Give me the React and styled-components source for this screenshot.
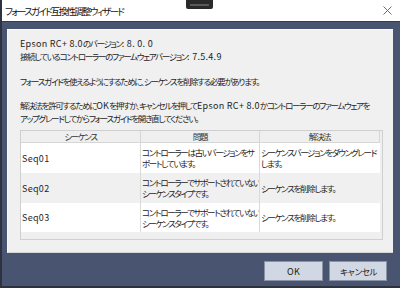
import styled, { createGlobalStyle } from "styled-components";

const GlobalStyle = createGlobalStyle`
  html, body {
    margin: 0;
    padding: 0;
    background: #485470;
  }
  body {
    font-family: "Noto Sans CJK JP", "Noto Sans", sans-serif;
    font-feature-settings: "palt";
    color: #1e1e1e;
  }
`;

const Window = styled.div`
  position: relative;
  width: 400px;
  height: 288px;
  box-sizing: border-box;
  display: flex;
  flex-direction: column;
  background: #485470;
  border-left: 2px solid #2c3240;
  border-bottom: 2px solid #2c3240;
  overflow: hidden;
`;

const TitleBar = styled.div`
  height: 21px;
  flex: none;
  display: flex;
  align-items: center;
  justify-content: space-between;
  padding: 0 8px 0 5px;
  margin-left: -2px;
  background: #ffffff;
  border-bottom: 1px solid #343b4c;
`;

const Title = styled.span`
  font-size: 9.5px;
  letter-spacing: -1.7px;
  color: #111;
  white-space: nowrap;
`;

const CloseIcon = styled.svg`
  width: 9px;
  height: 9px;
`;

const GrabTab = styled.div`
  position: absolute;
  left: 184px;
  top: 0;
  width: 27px;
  height: 9px;
  background: #2a2a2a;
  border-radius: 0 0 2px 2px;
  display: flex;
  align-items: center;
  justify-content: center;

  &::after {
    content: "";
    width: 19px;
    height: 2px;
    background: #5a5a5a;
  }
`;

const Body = styled.div`
  flex: 1;
  display: flex;
  flex-direction: column;
  padding: 7px 7px 0 5px;
`;

const Panel = styled.div`
  height: 224px;
  box-sizing: border-box;
  background: #f0f0f0;
  border-top: 1px solid #fafafa;
  border-left: 1px solid #fafafa;
  border-bottom: 1px solid #d6d6d6;
  padding: 7px 10px 0 12px;
  font-size: 8.5px;
  letter-spacing: -1.3px;
  line-height: 12px;
`;

const Latin = styled.span`
  font-size: 9px;
  letter-spacing: 0.3px;
`;

const Line = styled.div`
  white-space: nowrap;
  min-height: 12px;
`;

const Table = styled.div`
  margin-top: 6px;
  height: 110px;
  box-sizing: border-box;
  border: 1px solid #cfcfcf;
  background: #efefef;
  display: grid;
  grid-template-columns: 120px 119px 120px;
  grid-template-rows: 12px 30px 30px 29px;
  align-content: start;
`;

const HeadCell = styled.div`
  background: #efefef;
  border-right: 1px solid #d6d6d6;
  border-bottom: 1px solid #d6d6d6;
  display: flex;
  align-items: center;
  justify-content: center;
  line-height: 11px;
  color: #333;

  &:last-of-type {
    border-right: none;
  }
`;

const Cell = styled.div`
  background: ${(p) => (p.$alt ? "#f0f0f0" : "#ffffff")};
  border-right: ${(p) => (p.$last ? "none" : "1px solid #dadada")};
  display: flex;
  align-items: center;
  padding-left: 1px;
  line-height: 11px;
  white-space: nowrap;
  overflow: hidden;
`;

const Footer = styled.div`
  display: flex;
  justify-content: flex-end;
  gap: 6px;
  padding: 8px 6px 0 0;
`;

const Button = styled.button`
  width: ${(p) => p.$w}px;
  height: 20px;
  box-sizing: border-box;
  background: #d1d7e3;
  border: 1px solid #8a93a5;
  font-family: inherit;
  font-size: ${(p) => (p.$jp ? "8.5px" : "9px")};
  letter-spacing: ${(p) => (p.$jp ? "-1.2px" : "0.2px")};
  color: #1a1a1a;
  padding: 0;
`;

const rows = [
  {
    seq: "Seq01",
    problem: ["コントローラーは古いバージョンをサ", "ポートしています。"],
    fix: ["シーケンスバージョンをダウングレード", "します。"],
  },
  {
    seq: "Seq02",
    problem: ["コントローラーでサポートされていない", "シーケンスタイプです。"],
    fix: ["シーケンスを削除します。"],
  },
  {
    seq: "Seq03",
    problem: ["コントローラーでサポートされていない", "シーケンスタイプです。"],
    fix: ["シーケンスを削除します。"],
  },
];

function Lines({ items }) {
  return (
    <div>
      {items.map((t) => (
        <div key={t}>{t}</div>
      ))}
    </div>
  );
}

export default function App() {
  return (
    <>
      <GlobalStyle />
      <Window>
        <TitleBar>
          <Title>フォースガイド互換性調整ウィザード</Title>
          <CloseIcon viewBox="0 0 9 9">
            <path d="M0.5 0.5 L8.5 8.5 M8.5 0.5 L0.5 8.5" stroke="#6f6f6f" strokeWidth="1" fill="none" />
          </CloseIcon>
        </TitleBar>
        <GrabTab />
        <Body>
          <Panel>
            <Line><Latin>Epson RC+ 8.0</Latin>のバージョン<Latin>: 8. 0. 0</Latin></Line>
            <Line>接続しているコントローラーのファームウェアバージョン<Latin>: 7.5.4.9</Latin></Line>
            <Line />
            <Line>フォースガイドを使えるようにするために、シーケンスを削除する必要があります。</Line>
            <Line />
            <Line>解決法を許可するために<Latin>OK</Latin>を押すか、キャンセルを押して<Latin>Epson RC+ 8.0</Latin>かコントローラーのファームウェアを</Line>
            <Line>アップグレードしてからフォースガイドを開き直してください。</Line>
            <Table>
              <HeadCell>シーケンス</HeadCell>
              <HeadCell>問題</HeadCell>
              <HeadCell>解決法</HeadCell>
              {rows.map((r, i) => [
                <Cell key={r.seq + "a"} $alt={i === 1}><Latin>{r.seq}</Latin></Cell>,
                <Cell key={r.seq + "b"} $alt={i === 1}><Lines items={r.problem} /></Cell>,
                <Cell key={r.seq + "c"} $alt={i === 1} $last><Lines items={r.fix} /></Cell>,
              ])}
            </Table>
          </Panel>
          <Footer>
            <Button $w={59}>OK</Button>
            <Button $w={58} $jp>キャンセル</Button>
          </Footer>
        </Body>
      </Window>
    </>
  );
}
